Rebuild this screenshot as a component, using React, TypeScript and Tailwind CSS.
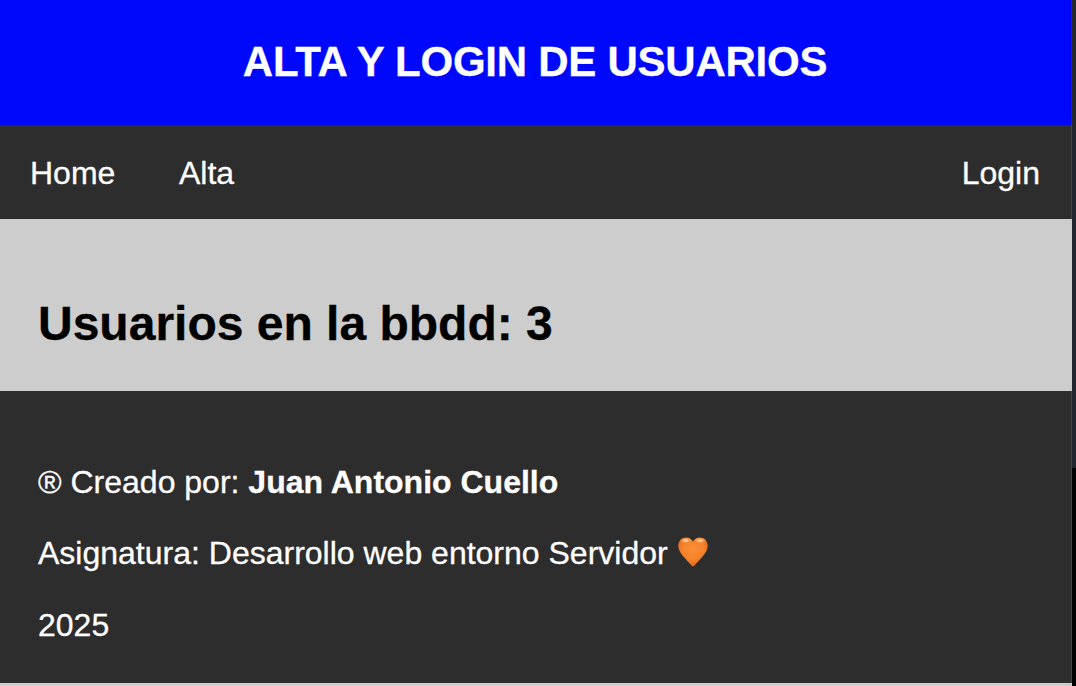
function OrangeHeart() {
  return (
    <svg role="img" aria-label="Corazón naranja" viewBox="0 0 30 30" className="ml-[10px] inline-block h-[30px] w-[30px] align-[-3px]">
      <defs>
        <radialGradient id="heart-fill" cx="0.5" cy="0.4" r="0.62">
          <stop offset="0" stopColor="#f98f35" />
          <stop offset="0.6" stopColor="#f5822a" />
          <stop offset="1" stopColor="#dc641c" />
        </radialGradient>
        <radialGradient id="heart-shine">
          <stop offset="0" stopColor="#ffe6c2" />
          <stop offset="1" stopColor="#ffb566" stopOpacity="0" />
        </radialGradient>
      </defs>
      <path
        d="M15 4.8C13.8 2 11.4.4 8.3.4 3.8.4.3 3.9.3 8.7c0 7.600 8.600 14 13.400 20 .8 1 1.800 1 2.600 0 4.800-6 13.400-12.400 13.400-20C29.700 3.900 26.200.4 21.700.4 18.600.4 16.200 2 15 4.800Z"
        fill="url(#heart-fill)"
      />
      <ellipse cx="7.800" cy="3.400" rx="6" ry="3" fill="url(#heart-shine)" />
      <ellipse cx="22.200" cy="3.400" rx="6" ry="3" fill="url(#heart-shine)" />
    </svg>
  );
}

export default function App() {
  return (
    <div className="flex h-[686px] w-[1076px] overflow-hidden font-['Liberation_Sans',Arial,sans-serif] text-[32px] leading-9 text-white [-webkit-text-stroke:0.3px]">
      <div className="flex w-[1072px] shrink-0 flex-col bg-[#cdcdcd]">
        <header className="h-[125px] shrink-0 border-r border-[#1a20c4] bg-[#0008fa] pt-[38px] pr-px text-center">
          <h1 className="text-[42px] leading-[48px] font-bold tracking-[-0.25px] whitespace-nowrap">ALTA Y LOGIN DE USUARIOS</h1>
        </header>
        <nav className="flex h-[94px] shrink-0 items-start border-r border-[#454545] bg-[#2d2d2d] pt-[30px] pr-[31px] pl-[30px]">
          <a className="w-[149px]">Home</a>
          <a>Alta</a>
          <a className="ml-auto">Login</a>
        </nav>
        <main className="h-[172px] shrink-0 bg-[#cdcdcd] pt-[77px] pl-[38px] text-black">
          <h2 className="text-[48px] leading-[55px] font-bold whitespace-nowrap">Usuarios en la bbdd: 3</h2>
        </main>
        <footer className="h-[292px] shrink-0 border-r border-[#454545] bg-[#2d2d2d] pt-[73px] pl-[38px]">
          <p className="h-[71px] whitespace-nowrap">
            ® Creado por: <strong>Juan Antonio Cuello</strong>
          </p>
          <p className="h-[72px] whitespace-nowrap">
            Asignatura: Desarrollo web entorno Servidor<OrangeHeart />
          </p>
          <p>2025</p>
        </footer>
      </div>
      <div className="w-1 shrink-0">
        <div className="h-[468px] bg-[#23262d]" />
        <div className="h-[218px] bg-[#020203]" />
      </div>
    </div>
  );
}
